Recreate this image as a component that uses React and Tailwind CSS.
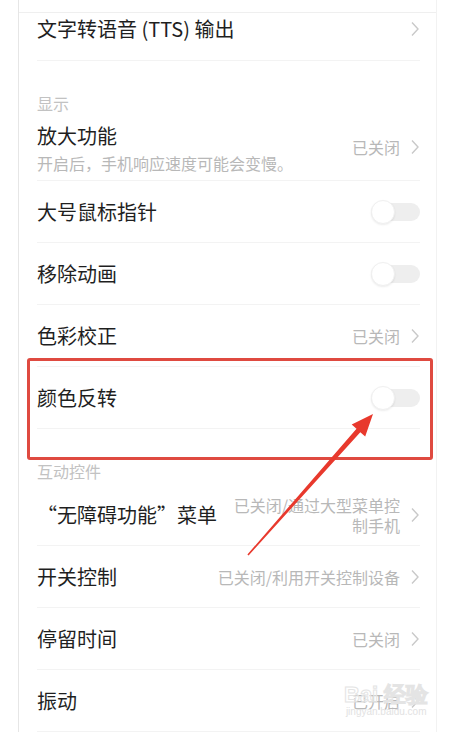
import React from 'react';

const FONT = { fontFamily: '"Noto Sans CJK SC", "Noto Sans", sans-serif' };

const Chevron = () => (
    <svg width="10" height="16" viewBox="0 0 10 16" className="flex-shrink-0">
        <polyline points="2,1.5 8,8 2,14.5" fill="none" stroke="#c9c9c9" strokeWidth="1.4" />
    </svg>
);

const Toggle = () => (
    <div className="relative w-[49px] h-[24px] flex-shrink-0">
        <div className="absolute left-0 right-0 top-[3px] h-[18px] rounded-full bg-[#eeeeee]" />
        <div className="absolute left-0 top-0 h-[24px] w-[24px] rounded-full bg-white border border-[#f0f0f0] shadow-[0_1px_2px_rgba(0,0,0,0.08)]" />
    </div>
);

const Value = ({ children }) => (
    <div className="flex items-center gap-[10px] flex-shrink-0">
        <span className="text-[16px] leading-[20px] text-[#b8b8b8] text-right">{children}</span>
        <Chevron />
    </div>
);

const Row = ({ title, right, h = 'h-[62px]' }) => (
    <div className={`${h} flex items-center justify-between border-b border-[#f3f3f3]`}>
        <span className="text-[20px] leading-[24px] text-[#1f1f1f]">{title}</span>
        {right}
    </div>
);

const Header = ({ children, h }) => (
    <div className={`${h} pt-[30px]`}>
        <span className="text-[16px] leading-[20px] text-[#c2c2c2]">{children}</span>
    </div>
);

export default function App() {
    return (
        <div className="relative w-[462px] h-[732px] overflow-hidden bg-white" style={FONT}>
            <div className="ml-[18px] w-[419px] h-full border-l border-r border-l-[#e6e6e6] border-r-[#f2f2f2]">
                <div className="h-[13px] border-b border-[#efefef]" />

                <div className="pl-[18px] pr-[16px]">
                    {/* 文字转语音 */}
                    <div className="h-[48px] flex items-start justify-between pt-[4px] border-b border-[#f3f3f3]">
                        <span className="text-[20px] leading-[24px] text-[#1f1f1f]">文字转语音 (TTS) 输出</span>
                        <div className="pt-[4px]"><Chevron /></div>
                    </div>

                    <Header h="h-[52px]">显示</Header>

                    <div className="h-[68px] flex items-center justify-between border-b border-[#f3f3f3]">
                        <div className="flex flex-col self-start pt-[11px]">
                            <span className="text-[20px] leading-[24px] text-[#1f1f1f]">放大功能</span>
                            <span className="mt-[5px] text-[16px] leading-[20px] text-[#b8b8b8]">开启后，手机响应速度可能会变慢。</span>
                        </div>
                        <Value>已关闭</Value>
                    </div>

                    <Row title="大号鼠标指针" right={<Toggle />} />
                    <Row title="移除动画" right={<Toggle />} />
                    <Row title="色彩校正" right={<Value>已关闭</Value>} />
                    <Row title="颜色反转" right={<Toggle />} />

                    <Header h="h-[56px]">互动控件</Header>

                    <Row
                        h="h-[61px]"
                        title="“无障碍功能”菜单"
                        right={<Value><span className="block w-[168px]">已关闭/通过大型菜单控制手机</span></Value>}
                    />
                    <Row title="开关控制" right={<Value>已关闭/利用开关控制设备</Value>} />
                    <Row title="停留时间" right={<Value>已关闭</Value>} />
                    <Row title="振动" right={<Value>已开启</Value>} />
                </div>
            </div>

            {/* annotation: red box */}
            <div className="absolute left-[27px] top-[358px] w-[406px] h-[102px] border-[3px] border-[#df4a40] rounded-[3px] pointer-events-none" />

            {/* annotation: arrow */}
            <svg className="absolute left-0 top-0 pointer-events-none" width="462" height="732">
                <polygon
                    points="247.4,554.5 356.5,428.8 351.7,424.5 373,414 365.2,436.5 360.3,432.2 248.6,555.5"
                    fill="#e8392d"
                />
            </svg>

            {/* watermark */}
            <div className="absolute left-[344px] top-[684px] flex flex-col items-center pointer-events-none">
                <span className="text-[22px] leading-[22px] font-bold text-white/40 [-webkit-text-stroke:1px_#e4e4e4]" style={{ fontFamily: '"Liberation Sans", sans-serif' }}>Bai 经验</span>
                <span className="text-[10px] leading-[12px] text-[#e2e2e2]" style={{ fontFamily: '"Liberation Sans", sans-serif' }}>jingyan.baidu.com</span>
            </div>
        </div>
    );
}
